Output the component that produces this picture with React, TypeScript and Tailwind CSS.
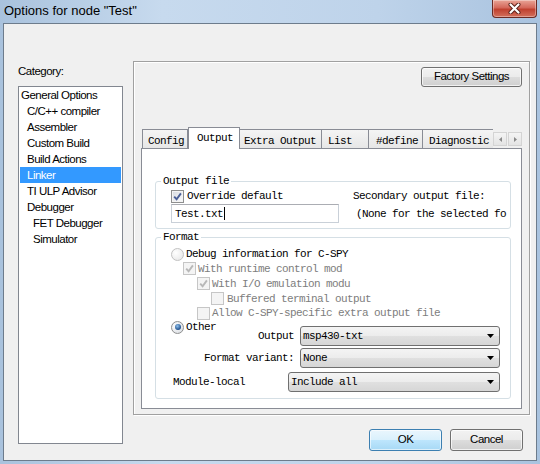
import React from 'react'

const ui = "font-['Liberation_Sans',Arial,sans-serif] text-[11.5px] tracking-[-0.5px]"
const mono = "font-['Liberation_Mono',monospace] text-[11px] tracking-[-0.6px]"

const categories: { label: string; level: number }[] = [
  { label: 'General Options', level: 0 },
  { label: 'C/C++ compiler', level: 1 },
  { label: 'Assembler', level: 1 },
  { label: 'Custom Build', level: 1 },
  { label: 'Build Actions', level: 1 },
  { label: 'Linker', level: 1 },
  { label: 'TI ULP Advisor', level: 1 },
  { label: 'Debugger', level: 1 },
  { label: 'FET Debugger', level: 2 },
  { label: 'Simulator', level: 2 },
]

const indent: Record<number, string> = {
  0: 'pl-[1px]',
  1: 'pl-[7px]',
  2: 'pl-[13px]',
}

const tabs = [
  { label: 'Config', w: 'w-[46px] pl-[5px] border-l' },
  { label: 'Output', w: 'w-[52px] pl-[8px]', active: true },
  { label: 'Extra Output', w: 'w-[82px] pl-[4px]' },
  { label: 'List', w: 'w-[47px] pl-[6px]' },
  { label: '#define', w: 'w-[54px] pl-[7px]' },
  { label: 'Diagnostic', w: 'w-[72px] pl-[6px]' },
]

function CheckBox({ checked, disabled }: { checked?: boolean; disabled?: boolean }) {
  return (
    <span
      className={`flex h-[13px] w-[13px] shrink-0 items-center justify-center border ${
        disabled
          ? 'border-[#c6c6c6] bg-[#f4f4f4]'
          : 'border-[#8e8f8f] bg-[linear-gradient(135deg,#d6dae0,#fcfcfc)] shadow-[inset_0_0_0_1px_#f4f4f4]'
      }`}
    >
      {checked && (
        <svg width="9" height="9" viewBox="0 0 9 9">
          <path
            d="M1.2 4.6 L3.6 7.2 L7.9 1.4"
            fill="none"
            stroke={disabled ? '#b8b8b8' : '#4a5f97'}
            strokeWidth="1.9"
          />
        </svg>
      )}
    </span>
  )
}

function Radio({ checked, disabled }: { checked?: boolean; disabled?: boolean }) {
  return (
    <span
      className={`flex h-[13px] w-[13px] shrink-0 items-center justify-center rounded-full border ${
        disabled
          ? 'border-[#c2c2c2] bg-[radial-gradient(circle_at_35%_35%,#ffffff,#e4e4e4)]'
          : 'border-[#8e8f8f] bg-[radial-gradient(circle_at_35%_35%,#ffffff,#d4d8de)]'
      }`}
    >
      {checked && (
        <span className="h-[6px] w-[6px] rounded-full bg-[radial-gradient(circle_at_40%_35%,#8fc0ec,#1d4f8c_70%)]" />
      )}
    </span>
  )
}

function Select({ value, width }: { value: string; width: string }) {
  return (
    <div
      className={`flex h-[20px] shrink-0 items-center justify-between rounded-[3px] border border-[#707070] bg-[linear-gradient(#f4f4f4,#ececec_50%,#e0e0e0_50%,#d6d6d6)] pl-[2px] pr-[5px] ${width}`}
    >
      <span className={`${mono} leading-[16px]`}>{value}</span>
      <svg width="7" height="4" viewBox="0 0 7 4">
        <path d="M0 0 H7 L3.5 4 Z" fill="#000" />
      </svg>
    </div>
  )
}

function CloseButton() {
  return (
    <div className="ml-auto mr-[3px] flex h-[18px] w-[45px] items-center justify-center rounded-b-[4px] border border-t-0 border-[#6b2b24] bg-[linear-gradient(#e9a597,#d4685a_45%,#c0412f_55%,#d3705c)] shadow-[inset_0_0_0_1px_rgba(255,255,255,0.35)]">
      <svg width="13" height="11" viewBox="0 0 13 11">
        <path d="M2.5 1.5 L10.5 9.5 M10.5 1.5 L2.5 9.5" stroke="#5a2018" strokeWidth="4" strokeLinecap="round" />
        <path d="M2.5 1.5 L10.5 9.5 M10.5 1.5 L2.5 9.5" stroke="#ffffff" strokeWidth="2.2" strokeLinecap="round" />
      </svg>
    </div>
  )
}

function TabArrow({ dir }: { dir: 'left' | 'right' }) {
  return (
    <div className="flex h-[14px] w-[14px] items-center justify-center border border-[#d4d4d4] bg-[linear-gradient(#f4f4f4,#e4e4e4)]">
      <svg width="3" height="5" viewBox="0 0 3 5">
        <path d={dir === 'left' ? 'M3 0 V5 L0 2.5 Z' : 'M0 0 V5 L3 2.5 Z'} fill="#8a8a8a" />
      </svg>
    </div>
  )
}

export default function App() {
  return (
    <div className="flex h-[464px] w-[540px] flex-col overflow-hidden bg-[linear-gradient(90deg,#a9c2dd,#c7daee_30%,#bed3ea_70%,#a9c3df)] text-black">
      <div className="flex h-[23px] shrink-0 items-start">
        <span className="pl-[4px] pt-[2px] font-['Liberation_Sans',Arial,sans-serif] text-[13px] leading-[17px]">
          {'Options for node "Test"'}
        </span>
        <CloseButton />
      </div>

      <div className="mx-[3px] flex h-[438px] shrink-0 border border-[#6d7c8c] bg-[#f0f0f0]">
        {/* category list */}
        <div className="ml-[14px] mt-[39px] flex w-[105px] flex-col">
          <div className={`${ui} leading-[16px]`}>Category:</div>
          <div className="mt-[7px] h-[358px] border border-[#828790] bg-white">
            {categories.map((c) => (
              <div
                key={c.label}
                className={`mx-px h-[16px] whitespace-nowrap ${ui} leading-[16px] ${indent[c.level]} ${
                  c.label === 'Linker' ? 'bg-[#3399ff] text-white' : ''
                }`}
              >
                {c.label}
              </div>
            ))}
          </div>
        </div>

        {/* options */}
        <div className="ml-[10px] mt-[37px] flex w-[397px] flex-col">
          <div className="flex h-[354px] flex-col border border-[#a0a0a0] px-[7px] pb-[5px] pt-[5px] shadow-[inset_1px_1px_0_#ffffff,1px_1px_0_#ffffff]">
            <div className="flex justify-end">
              <button
                className={`h-[20px] w-[101px] rounded-[3px] border border-[#707070] bg-[linear-gradient(#f2f2f2,#ebebeb_50%,#dddddd_50%,#cfcfcf)] shadow-[inset_0_0_0_1px_rgba(255,255,255,0.7)] ${ui}`}
              >
                Factory Settings
              </button>
            </div>

            <div className="mt-[40px] flex h-[22px] shrink-0">
              <div className="ml-px flex h-full w-[351px] items-end overflow-hidden">
                {tabs.map((t) =>
                  t.active ? (
                    <div
                      key={t.label}
                      className={`relative z-10 h-[22px] shrink-0 whitespace-nowrap border border-b-0 border-[#898c95] bg-white pt-[2px] ${t.w} ${mono} leading-[16px]`}
                    >
                      {t.label}
                    </div>
                  ) : (
                    <div
                      key={t.label}
                      className={`h-[20px] shrink-0 whitespace-nowrap border-r border-t border-[#898c95] bg-[linear-gradient(#f4f4f4,#e6e6e6)] pt-[3px] ${t.w} ${mono} leading-[16px]`}
                    >
                      {t.label}
                    </div>
                  ),
                )}
              </div>
              <div className="mt-[5px] flex gap-px self-start">
                <TabArrow dir="left" />
                <TabArrow dir="right" />
              </div>
            </div>

            <div className={`-mt-px flex min-w-0 flex-1 flex-col border border-[#898c95] bg-white pl-[13px] pr-[10px] pt-[24px] ${mono}`}>
              <fieldset className="min-w-0 rounded-[3px] border border-[#d5dfe5] p-0">
                <legend className="ml-[5px] px-[2px] leading-[16px]">Output file</legend>
                <div className="flex pb-[5px] pl-[15px] pt-px">
                  <div className="flex w-[168px] shrink-0 flex-col">
                    <div className="flex h-[13px] items-center gap-[3px] leading-[13px]">
                      <CheckBox checked />
                      <span>Override default</span>
                    </div>
                    <div className="mt-px flex h-[19px] items-center border border-[#c9d0d8] border-t-[#abadb3] bg-white pl-[3px] leading-[16px]">
                      <span>Test.txt</span>
                      <span className="ml-px h-[13px] w-px bg-black" />
                    </div>
                  </div>
                  <div className="ml-[14px] flex min-w-0 flex-col">
                    <div className="h-[13px] whitespace-nowrap leading-[13px]">Secondary output file:</div>
                    <div className="mt-px flex h-[19px] items-center whitespace-nowrap pl-[3px] leading-[16px]">
                      (None for the selected fo
                    </div>
                  </div>
                </div>
              </fieldset>

              <fieldset className="min-w-0 rounded-[3px] border border-[#d5dfe5] p-0">
                <legend className="ml-[5px] px-[2px] leading-[16px]">Format</legend>
                <div className="flex flex-col pb-[6px] pt-[2px]">
                  <div className="flex h-[14px] items-center gap-[2px] pl-[15px] leading-[14px]">
                    <Radio disabled />
                    <span>Debug information for C-SPY</span>
                  </div>
                  <div className="flex h-[15px] items-center gap-[2px] pl-[27px] leading-[14px] text-[#7d7d7d]">
                    <CheckBox checked disabled />
                    <span>With runtime control mod</span>
                  </div>
                  <div className="flex h-[15px] items-center gap-[2px] pl-[41px] leading-[14px] text-[#7d7d7d]">
                    <CheckBox checked disabled />
                    <span>With I/O emulation modu</span>
                  </div>
                  <div className="flex h-[15px] items-center gap-[3px] pl-[55px] leading-[14px] text-[#7d7d7d]">
                    <CheckBox disabled />
                    <span>Buffered terminal output</span>
                  </div>
                  <div className="flex h-[14px] items-center gap-[2px] pl-[41px] leading-[14px] text-[#7d7d7d]">
                    <CheckBox disabled />
                    <span>Allow C-SPY-specific extra output file</span>
                  </div>

                  {/* "Other" radio shares its band with the output selects */}
                  <div className="grid">
                    <div className="col-start-1 row-start-1 flex h-[14px] items-center gap-[2px] self-start pl-[15px] leading-[14px]">
                      <Radio checked />
                      <span>Other</span>
                    </div>
                    <div className="col-start-1 row-start-1 mt-[6px] flex flex-col gap-[2px] justify-self-end pr-[10px]">
                      <div className="flex items-center justify-end gap-[6px]">
                        <span className="whitespace-nowrap">Output</span>
                        <Select value="msp430-txt" width="w-[200px]" />
                      </div>
                      <div className="flex items-center justify-end gap-[6px]">
                        <span className="whitespace-nowrap">Format variant:</span>
                        <Select value="None" width="w-[200px]" />
                      </div>
                    </div>
                  </div>

                  <div className="mt-[4px] flex items-center pl-[17px] pr-[10px]">
                    <span className="whitespace-nowrap">Module-local</span>
                    <div className="ml-auto">
                      <Select value="Include all" width="w-[212px]" />
                    </div>
                  </div>
                </div>
              </fieldset>
            </div>
          </div>

          <div className="mt-[14px] flex justify-end gap-[8px] pr-[7px]">
            <button
              className={`h-[22px] w-[73px] rounded-[3px] border border-[#3c7fb1] bg-[linear-gradient(#eaf6fd,#d9f0fc_50%,#bee6fd_50%,#a7d9f5)] shadow-[inset_0_0_0_1px_rgba(255,255,255,0.6)] ${ui}`}
            >
              OK
            </button>
            <button
              className={`h-[22px] w-[73px] rounded-[3px] border border-[#707070] bg-[linear-gradient(#f2f2f2,#ebebeb_50%,#dddddd_50%,#cfcfcf)] shadow-[inset_0_0_0_1px_rgba(255,255,255,0.7)] ${ui}`}
            >
              Cancel
            </button>
          </div>
        </div>
      </div>
    </div>
  )
}
